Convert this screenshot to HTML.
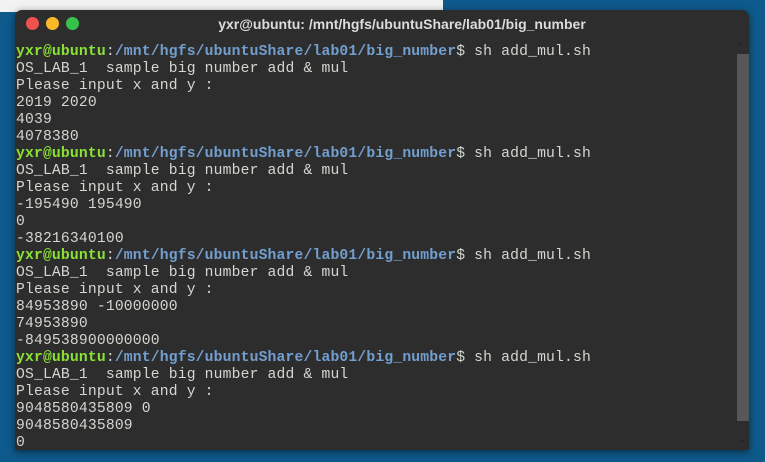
<!DOCTYPE html><html><head><style>
body{margin:0;width:765px;height:462px;overflow:hidden;background:#0e5a8c;position:relative;font-family:"Liberation Mono",monospace}
.white{position:absolute;left:0;top:0;width:443px;height:12px;background:#f2f2f2}
.win{position:absolute;left:15px;top:10px;width:734px;height:440px;background:#2d2d2d;border-radius:7px 7px 0 0;box-shadow:0 2px 8px rgba(0,0,0,.5)}
.title{position:absolute;left:0;right:0;top:6px;text-align:center;color:#dcdcdc;font:bold 14px "Liberation Sans",sans-serif;padding-left:40px}
.b{position:absolute;top:7px;width:13px;height:13px;border-radius:50%}
pre{position:absolute;left:1px;top:34px;margin:0;font:14.7px/17px "Liberation Mono",monospace;letter-spacing:0.17px;color:#d3d7cf}
.g{color:#8ae234;font-weight:bold}.u{color:#729fcf;font-weight:bold}
.sb{position:absolute;left:722px;top:44px;width:12px;height:367px;background:#575757}
.ar{position:absolute;left:723px;color:#222;font:10px sans-serif}
</style></head><body><div class="white"></div>
<div class="win">
<div class="b" style="left:11px;background:#f0534f"></div>
<div class="b" style="left:31px;background:#fbb928"></div>
<div class="b" style="left:51px;background:#36c24a"></div>
<div class="title">yxr@ubuntu: /mnt/hgfs/ubuntuShare/lab01/big_number</div>
<pre><span class="g">yxr@ubuntu</span>:<span class="u">/mnt/hgfs/ubuntuShare/lab01/big_number</span>$ sh add_mul.sh
OS_LAB_1  sample big number add &amp; mul
Please input x and y :
2019 2020
4039
4078380
<span class="g">yxr@ubuntu</span>:<span class="u">/mnt/hgfs/ubuntuShare/lab01/big_number</span>$ sh add_mul.sh
OS_LAB_1  sample big number add &amp; mul
Please input x and y :
-195490 195490
0
-38216340100
<span class="g">yxr@ubuntu</span>:<span class="u">/mnt/hgfs/ubuntuShare/lab01/big_number</span>$ sh add_mul.sh
OS_LAB_1  sample big number add &amp; mul
Please input x and y :
84953890 -10000000
74953890
-849538900000000
<span class="g">yxr@ubuntu</span>:<span class="u">/mnt/hgfs/ubuntuShare/lab01/big_number</span>$ sh add_mul.sh
OS_LAB_1  sample big number add &amp; mul
Please input x and y :
9048580435809 0
9048580435809
0</pre>
<div class="sb"></div>
<div class="ar" style="top:32px">^</div>
<div class="ar" style="top:424px">&#8964;</div>
</div></body></html>
